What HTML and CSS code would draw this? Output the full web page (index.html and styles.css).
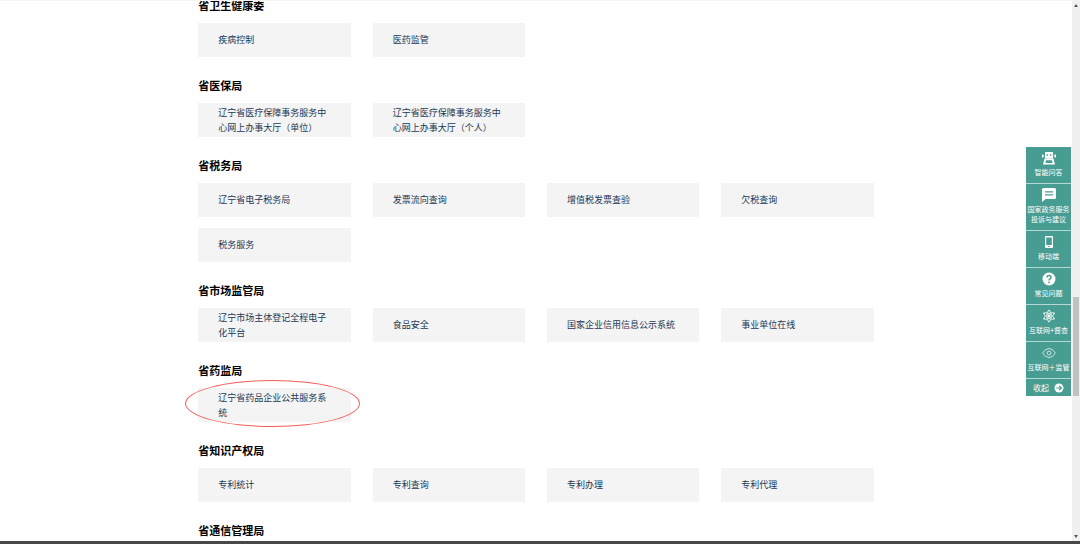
FILE: index.html
```html
<!DOCTYPE html>
<html lang="zh-CN">
<head>
    <meta charset="UTF-8">
    <meta name="viewport" content="width=device-width, initial-scale=1.0">
    <title>部门服务</title>
    <link rel="stylesheet" href="styles.css">
</head>

<body>
    <div class="window">
        <main class="page">
            <div class="departments">
                <section class="department">
                    <h2>省卫生健康委</h2>
                    <ul class="services">
                        <li><a href="#">疾病控制</a></li>
                        <li><a href="#">医药监管</a></li>
                    </ul>
                </section>
                <section class="department">
                    <h2>省医保局</h2>
                    <ul class="services">
                        <li><a href="#">辽宁省医疗保障事务服务中心网上办事大厅（单位）</a></li>
                        <li><a href="#">辽宁省医疗保障事务服务中心网上办事大厅（个人）</a></li>
                    </ul>
                </section>
                <section class="department">
                    <h2>省税务局</h2>
                    <ul class="services">
                        <li><a href="#">辽宁省电子税务局</a></li>
                        <li><a href="#">发票流向查询</a></li>
                        <li><a href="#">增值税发票查验</a></li>
                        <li><a href="#">欠税查询</a></li>
                        <li><a href="#">税务服务</a></li>
                    </ul>
                </section>
                <section class="department">
                    <h2>省市场监管局</h2>
                    <ul class="services">
                        <li><a href="#">辽宁市场主体登记全程电子化平台</a></li>
                        <li><a href="#">食品安全</a></li>
                        <li><a href="#">国家企业信用信息公示系统</a></li>
                        <li><a href="#">事业单位在线</a></li>
                    </ul>
                </section>
                <section class="department">
                    <h2>省药监局</h2>
                    <ul class="services">
                        <li class="marked"><a href="#">辽宁省药品企业公共服务系统</a></li>
                    </ul>
                </section>
                <section class="department">
                    <h2>省知识产权局</h2>
                    <ul class="services">
                        <li><a href="#">专利统计</a></li>
                        <li><a href="#">专利查询</a></li>
                        <li><a href="#">专利办理</a></li>
                        <li><a href="#">专利代理</a></li>
                    </ul>
                </section>
                <section class="department">
                    <h2>省通信管理局</h2>
                </section>
            </div>

            <nav class="sidebar">
                <a href="#">
                    <svg viewBox="0 0 14 14" fill="#fff">
                        <path fill-rule="evenodd" d="M3.500 1h7q.5 0 .5.500V7.500H3V1.500Q3 1 3.500 1zM4.600 3.200v1.600h1.500V3.200zM7.900 3.200v1.600h1.500V3.200z"/>
                        <path d="M0 3.500h1.300v3H0zM12.700 3.500H14v3h-1.300zM1.300 4.500h1v1h-1zM11.700 4.500h1v1h-1z"/>
                        <path fill-rule="evenodd" d="M2.500 7.500h9L13 13.500H1zM4 9.200L3.500 12h7L10 9.200z"/>
                    </svg>
                    <span>智能问答</span>
                </a>
                <a href="#">
                    <svg viewBox="0 0 14 14" fill="#fff">
                        <path fill-rule="evenodd" d="M1.500 0h11Q14 0 14 1.500v8Q14 11 12.500 11H3.500L0 14V1.500Q0 0 1.500 0zM3 3.200v1.300h8V3.200zM3 6.200v1.300h8V6.200z"/>
                    </svg>
                    <span>国家政务服务<br>投诉与建议</span>
                </a>
                <a href="#">
                    <svg viewBox="0 0 14 14" fill="#fff">
                        <path fill-rule="evenodd" d="M4 1h6q1 0 1 1v10q0 1-1 1H4q-1 0-1-1V2q0-1 1-1zM4.200 2.500v7.500h5.600V2.500zM6.300 11v1h1.400v-1z"/>
                    </svg>
                    <span>移动端</span>
                </a>
                <a href="#">
                    <svg viewBox="0 0 14 14">
                        <circle cx="7" cy="7" r="6.500" fill="#fff"/>
                        <path d="M5 5.500Q5 3.500 7 3.500T9 5.300Q9 6.200 8 6.800T7 8.400" fill="none" stroke="#489d93" stroke-width="1.500"/>
                        <circle cx="7" cy="10.300" r=".9" fill="#489d93"/>
                    </svg>
                    <span>常见问题</span>
                </a>
                <a href="#">
                    <svg viewBox="0 0 14 14" fill="none" stroke="#fff" stroke-width=".7">
                        <ellipse cx="7" cy="7" rx="2.200" ry="5.500"/>
                        <ellipse cx="7" cy="7" rx="2.200" ry="5.500" transform="rotate(60 7 7)"/>
                        <ellipse cx="7" cy="7" rx="2.200" ry="5.500" transform="rotate(120 7 7)"/>
                        <g fill="#fff" stroke="none">
                            <circle cx="7" cy="7" r="1.400"/>
                            <circle cx="7" cy="1.500" r=".8"/>
                            <circle cx="7" cy="12.500" r=".8"/>
                            <circle cx="2" cy="4.200" r=".8"/>
                            <circle cx="12" cy="4.200" r=".8"/>
                            <circle cx="2" cy="9.800" r=".8"/>
                            <circle cx="12" cy="9.800" r=".8"/>
                        </g>
                    </svg>
                    <span>互联网+督查</span>
                </a>
                <a href="#">
                    <svg viewBox="0 0 14 14" fill="none" stroke="#fff" stroke-width=".7">
                        <path d="M.6 7Q3 2.500 7 2.500T13.400 7Q11 11.500 7 11.500T.6 7z"/>
                        <circle cx="7" cy="7" r="1.900"/>
                    </svg>
                    <span>互联网＋监管</span>
                </a>
                <button type="button" class="collapse">
                    收起
                    <svg viewBox="0 0 10 10">
                        <circle cx="5" cy="5" r="4.500" fill="#fff"/>
                        <path d="M2.300 5h5M5.200 2.800L7.400 5 5.200 7.200" fill="none" stroke="#489d93" stroke-width="1.200"/>
                    </svg>
                </button>
            </nav>
        </main>

        <div class="scrollbar">
            <span class="arrow up"></span>
            <div class="track"><div class="thumb"></div></div>
            <span class="arrow down"></span>
        </div>
    </div>
    <div class="taskbar"></div>
</body>
</html>
```
FILE: styles.css
```css
* {
    box-sizing: border-box;
}

body {
    margin: 0;
    height: 100vh;
    display: flex;
    flex-direction: column;
    overflow: hidden;
    background-color: #fff;
    font-family: "Liberation Sans", "Noto Sans CJK SC", sans-serif;
}

.window {
    flex: 1;
    min-height: 0;
    display: flex;
    border-top: 1px solid #f4f4f4;
}

.page {
    flex: 1;
    position: relative;
    overflow: hidden;
}

.departments {
    width: 63%;
    margin: -3px auto 0;
}

.department {
    margin-bottom: 21px;
}

.department h2 {
    margin: 0 0 9px;
    font-size: 11px;
    line-height: 16px;
    color: #000;
}

.services {
    display: grid;
    grid-template-columns: repeat(4, 1fr);
    gap: 11px 22px;
    margin: 0;
    padding: 0;
    list-style: none;
}

.services li {
    position: relative;
}

.services a {
    display: flex;
    align-items: center;
    min-height: 34px;
    padding: 1px 20px 0;
    background-color: #f4f4f4;
    color: #1a3856;
    font-size: 9px;
    line-height: 15px;
    text-decoration: none;
}

.services a:hover {
    color: #489d93;
}

/* red ring around the highlighted service */
.marked::after {
    content: "";
    position: absolute;
    inset: -8px -9px -5px -13px;
    border: 1px solid #f4605c;
    border-radius: 50%;
    pointer-events: none;
}

.sidebar {
    position: absolute;
    top: 146px;
    right: 1px;
    width: 45px;
    background-color: #489d93;
}

.sidebar a {
    display: flex;
    flex-direction: column;
    align-items: center;
    gap: 3px;
    padding: 4px 0 5px;
    border-bottom: 1px solid #b5d8d4;
    color: #fff;
    font-size: 7px;
    line-height: 10px;
    text-align: center;
    text-decoration: none;
    white-space: nowrap;
}

.sidebar a svg {
    width: 14px;
    height: 14px;
}

.collapse {
    display: flex;
    align-items: center;
    justify-content: center;
    gap: 5px;
    width: 100%;
    height: 17px;
    padding: 0;
    border: 0;
    background: none;
    color: #fff;
    font-family: inherit;
    font-size: 8px;
    cursor: pointer;
}

.collapse svg {
    width: 10px;
    height: 10px;
}

.scrollbar {
    width: 8px;
    display: flex;
    flex-direction: column;
    align-items: center;
    padding: 3px 0;
    background-color: #f0f0f0;
}

.track {
    flex: 1;
    display: flex;
    flex-direction: column;
    width: 6px;
    margin: 4px 0;
}

.track::before {
    content: "";
    flex: 55;
}

.thumb {
    flex: 19;
    background-color: #c1c1c1;
}

.track::after {
    content: "";
    flex: 26;
}

.arrow {
    border: 2px solid transparent;
}

.up {
    border-top: 0;
    border-bottom: 3px solid #555;
}

.down {
    border-bottom: 0;
    border-top: 3px solid #555;
}

.taskbar {
    height: 3px;
    background-color: #47484a;
}
```
